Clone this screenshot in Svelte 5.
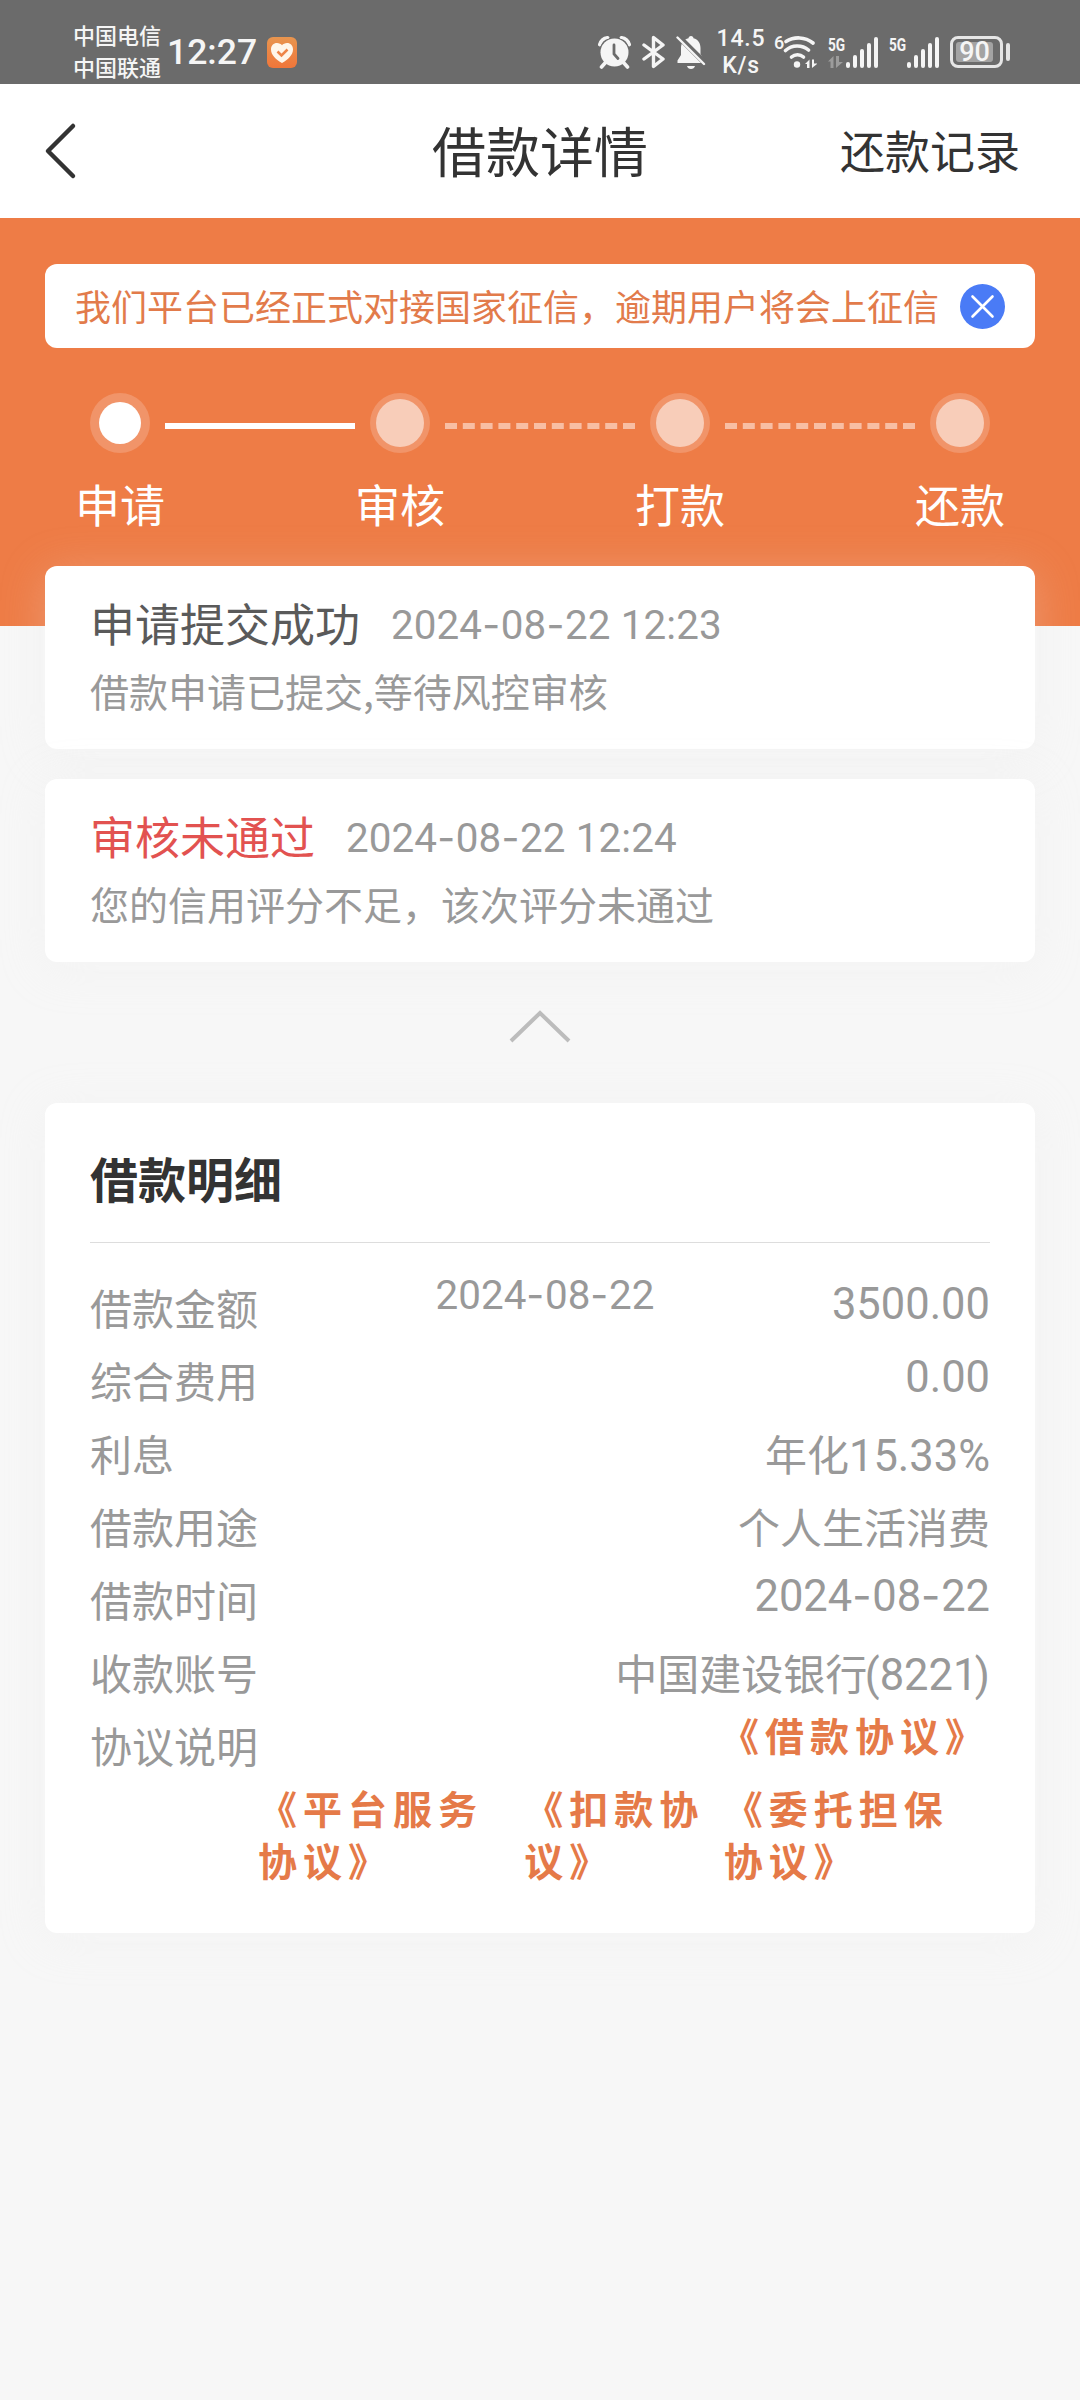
<script lang="ts">
  let noticeOpen = true;

  const steps = [
    { label: '申请', active: true },
    { label: '审核', active: false },
    { label: '打款', active: false },
    { label: '还款', active: false },
  ];

  const records = [
    { title: '申请提交成功', time: '2024-08-22 12:23', desc: '借款申请已提交,等待风控审核', failed: false },
    { title: '审核未通过', time: '2024-08-22 12:24', desc: '您的信用评分不足，该次评分未通过', failed: true },
  ];

  const details = [
    { label: '借款金额', note: '2024-08-22', value: '3500.00' },
    { label: '综合费用', value: '0.00' },
    { label: '利息', value: '年化15.33%' },
    { label: '借款用途', value: '个人生活消费' },
    { label: '借款时间', value: '2024-08-22' },
    { label: '收款账号', value: '中国建设银行(8221)' },
  ];

  const agreements = ['《平台服务协议》', '《扣款协议》', '《委托担保协议》'];
  const bars = [6, 13, 19, 25, 31];

  // latin runs and hyphens use a different face than the Chinese text
  function runs(text: string) {
    return text.match(/-|[()]|[\x20-\x27\x2a-\x2c\x2e-\x7e]+|[^\x20-\x7e]+/g) ?? [];
  }

  function runClass(run: string) {
    if (run === '-') return 'dash';
    if (run === '(' || run === ')') return 'num paren';
    return 'num';
  }

  function isNumeric(text: string) {
    return /^[\d.\- :]+$/.test(text);
  }
</script>

{#snippet mixed(text)}
  {#each runs(text) as run}{#if run.charCodeAt(0) < 128}<span class={runClass(run)}>{run}</span>{:else}{run}{/if}{/each}
{/snippet}

{#snippet signal(dim)}
  <div class="signal">
    <div class="net">
      <span>5G</span>
      {#if dim}
        <svg width="15" height="12" viewBox="0 0 15 12" fill="#9c9c9c">
          <path d="M0 5.500 5.500 0v12H2.500V5.500zM8 0h3v6h4l-7 6z" />
        </svg>
      {/if}
    </div>
    <div class="bars">
      {#each bars as h}
        <i style="height: {h}px"></i>
      {/each}
    </div>
  </div>
{/snippet}

<div class="page">
  <div class="status-bar">
    <div class="carriers">
      <span>中国电信</span>
      <span>中国联通</span>
    </div>
    <span class="clock">12:27</span>
    <svg class="app-badge" width="30" height="31" viewBox="0 0 30 31">
      <defs>
        <linearGradient id="badge" x1="0" y1="0" x2="0" y2="1">
          <stop offset="0" stop-color="#e8954f" />
          <stop offset="1" stop-color="#f0763a" />
        </linearGradient>
      </defs>
      <rect width="30" height="31" rx="6" fill="url(#badge)" />
      <path d="M15 26C9 22.500 4 18 4 12.500C4 8.500 6.500 6 10 6C12 6 14 7 15 8.200C16 7 18 6 20 6C23.500 6 26 8.500 26 12.500C26 18 21 22.500 15 26Z" fill="#fff6ea" />
      <path d="M10.500 14.500l4 4 6-6" fill="none" stroke="#ee8548" stroke-width="2.500" />
    </svg>

    <div class="status-icons">
      <svg width="33" height="33" viewBox="0 0 33 33">
        <path d="M2 9C3 5 6 2.500 10 2M31 9C30 5 27 2.500 23 2" fill="none" stroke="#f5f5f5" stroke-width="3.200" stroke-linecap="round" />
        <circle cx="16.500" cy="16.500" r="15.500" fill="#6b6b6b" />
        <path d="M1.500 8.500C2.500 5 5.500 2 9.500 1.500M31.500 8.500C30.500 5 27.500 2 23.500 1.500" fill="none" stroke="#f5f5f5" stroke-width="3" stroke-linecap="round" />
        <path d="M7.500 26.500l-4 4.500M25.500 26.500l4 4.500" stroke="#f5f5f5" stroke-width="3.600" stroke-linecap="round" />
        <circle cx="16.500" cy="16.500" r="14" fill="#f5f5f5" />
        <path d="M16 9v9l4 4.500" fill="none" stroke="#6b6b6b" stroke-width="2.800" stroke-linecap="round" />
      </svg>
      <svg width="23" height="34" viewBox="0 0 23 34" fill="none" stroke="#f5f5f5" stroke-width="3.400" stroke-linejoin="round" stroke-linecap="round">
        <path d="M2 10l19 14-9.500 7.500v-29L21 10 2 24" />
      </svg>
      <svg width="30" height="34" viewBox="0 0 30 34">
        <path d="M15 1c1.500 0 2.500 1 2.500 2.300C22 4.500 24.500 8 24.500 13v6L28 25v3H1.500v-2.500L5 20v-7C5 8 8 4.500 12.500 3.300 12.500 2 13.500 1 15 1zM11 31h8c-.5 1.800-2 3-4 3s-3.500-1.200-4-3z" fill="#f5f5f5" />
        <path d="M0 -1L32 31" stroke="#6b6b6b" stroke-width="5.500" />
        <path d="M1.500 2.500L28 29" stroke="#f5f5f5" stroke-width="2.400" stroke-linecap="round" />
      </svg>
      <div class="speed">
        <span>14.5</span>
        <span>K/s</span>
      </div>
      <div class="wifi">
        <span>6</span>
        <svg width="34" height="33" viewBox="0 0 34 33" fill="none" stroke="#f5f5f5" stroke-width="3.600" stroke-linecap="round">
          <path d="M3 5.500C11 .5 22 .5 30 7" />
          <path d="M2.500 14.500C9 8.500 19 8.500 25.500 14" />
          <path d="M8.500 21C12 18 17 18 20.500 21" />
          <circle cx="14" cy="28.500" r="3.200" fill="#f5f5f5" stroke="none" />
          <path d="M22 28l4.500-4.500V32H24v-4zM29 23.500h2v4h3.500L29 32z" fill="#f5f5f5" stroke="none" />
        </svg>
      </div>
      {@render signal(true)}
      {@render signal(false)}
      <div class="battery">
        <div class="cell"><span>90</span></div>
        <i></i>
      </div>
    </div>
  </div>

  <header>
    <svg class="back" width="34" height="60" viewBox="0 0 34 60">
      <path d="M29 6L4 31l25 25" fill="none" stroke="#333" stroke-width="4.500" stroke-linecap="round" stroke-linejoin="round" />
    </svg>
    <h1>借款详情</h1>
    <a href="#records">还款记录</a>
  </header>

  <section class="hero">
    {#if noticeOpen}
      <div class="notice">
        <p>我们平台已经正式对接国家征信，逾期用户将会上征信</p>
        <button aria-label="关闭" on:click={() => (noticeOpen = false)}>
          <svg width="45" height="45" viewBox="0 0 45 45">
            <circle cx="22.500" cy="22.500" r="22.500" fill="#4a7bf6" />
            <path d="M12.500 12.500l20 20M32.500 12.500l-20 20" stroke="#fff" stroke-width="2.600" stroke-linecap="round" />
          </svg>
        </button>
      </div>
    {/if}

    <div class="steps">
      {#each steps as step, i}
        {#if i > 0}
          <div class="line" class:done={i === 1}></div>
        {/if}
        <div class="step" class:active={step.active}>
          <div class="dot"><i></i></div>
          <span>{step.label}</span>
        </div>
      {/each}
    </div>
  </section>

  <main>
    {#each records as record}
      <div class="card record">
        <div class="record-head">
          <strong class:failed={record.failed}>{record.title}</strong>
          <span class="time">{@render mixed(record.time)}</span>
        </div>
        <p>{record.desc}</p>
      </div>
    {/each}

    <svg class="collapse" width="64" height="40" viewBox="0 0 64 40">
      <path d="M3 35L32 7l29 28" fill="none" stroke="#bcbcbc" stroke-width="4" />
    </svg>

    <div class="card detail">
      <h2>借款明细</h2>
      <div class="rows">
        {#each details as item}
          <div class="row">
            <span class="label">{item.label}</span>
            {#if item.note}
              <span class="note">{@render mixed(item.note)}</span>
            {/if}
            <span class="value" class:numeric={isNumeric(item.value)}>{@render mixed(item.value)}</span>
          </div>
        {/each}
        <div class="row">
          <span class="label">协议说明</span>
          <a class="agreement" href="#loan">《借款协议》</a>
        </div>
        <div class="agreements">
          {#each agreements as name}
            <a class="agreement" href="#agreement">{name}</a>
          {/each}
        </div>
      </div>
    </div>
  </main>
</div>

<style>
  :global(body) {
    background: #f7f7f7;
  }

  .page {
    width: 1080px;
    min-height: 2400px;
    background: #f7f7f7;
    font-family: "Noto Sans CJK SC", sans-serif;
    color: #333;
  }

  .page * {
    box-sizing: border-box;
  }

  h1, h2, p {
    margin: 0;
  }

  a {
    color: inherit;
    text-decoration: none;
  }

  svg {
    display: block;
    flex: none;
  }

  .status-bar {
    display: flex;
    align-items: center;
    height: 84px;
    padding: 20px 70px 0 73px;
    background: #6b6b6b;
    color: #f5f5f5;
  }

  .carriers {
    display: flex;
    flex-direction: column;
    padding-bottom: 3px;
    font-size: 22px;
    font-weight: 500;
    line-height: 31.500px;
  }

  .clock {
    margin-left: 6px;
    font-family: Roboto, sans-serif;
    font-size: 35.500px;
    font-weight: 500;
    line-height: 64px;
  }

  .app-badge {
    margin-left: 10px;
  }

  .status-icons {
    display: flex;
    align-items: center;
    gap: 11px;
    margin-left: auto;
    font-family: Roboto, sans-serif;
  }

  .speed {
    display: flex;
    flex-direction: column;
    align-items: center;
    width: 46px;
    padding-left: 2px;
    font-size: 23px;
    font-weight: 500;
    line-height: 27px;
    letter-spacing: 0.8px;
  }

  .wifi {
    display: flex;
    width: 43px;
  }

  .wifi span {
    width: 9px;
    font-size: 18px;
    font-weight: 500;
    line-height: 14px;
  }

  .signal {
    display: flex;
    justify-content: space-between;
    width: 50px;
    height: 31px;
  }

  .net {
    display: flex;
    flex-direction: column;
    justify-content: space-between;
    width: 0;
    font-size: 19px;
    font-weight: 700;
    line-height: 15px;
  }

  .net span {
    transform: scaleX(0.72);
    transform-origin: left;
  }

  .bars {
    display: flex;
    align-items: flex-end;
    gap: 3px;
  }

  .bars i {
    width: 4px;
    border-radius: 2px;
    background: #f5f5f5;
  }

  .battery {
    display: flex;
    align-items: center;
    gap: 3px;
    width: 60px;
  }

  .cell {
    display: flex;
    width: 53px;
    height: 32px;
    padding: 3px;
    border: 3px solid #e6e6e6;
    border-radius: 8px;
  }

  .cell span {
    width: 37px;
    border-radius: 3px;
    background: #a3a3a3;
    font-size: 27px;
    font-weight: 500;
    line-height: 20px;
    text-align: center;
  }

  .battery i {
    width: 4px;
    height: 18px;
    border-radius: 2px;
    background: #e6e6e6;
  }

  header {
    display: grid;
    grid-template-columns: 1fr auto 1fr;
    align-items: center;
    height: 134px;
    padding: 0 60px 2px 44px;
    background: #fff;
  }

  header h1 {
    padding-left: 16px;
    font-size: 54px;
    font-weight: 400;
    line-height: 70px;
  }

  header a {
    justify-self: end;
    font-size: 45px;
    line-height: 60px;
  }

  .hero {
    height: 408px;
    padding: 46px 45px 0;
    background: #ee7c46;
  }

  .notice {
    display: flex;
    align-items: center;
    justify-content: space-between;
    height: 84px;
    padding: 0 30px;
    border-radius: 12px;
    background: #fff;
  }

  .notice p {
    padding-bottom: 3px;
    color: #e27b4b;
    font-size: 36px;
    line-height: 50px;
    white-space: nowrap;
  }

  .notice button {
    padding: 0;
    border: none;
    background: none;
    cursor: pointer;
  }

  .steps {
    display: flex;
    justify-content: space-between;
    padding: 45px 30px 0;
  }

  .step {
    display: flex;
    flex-direction: column;
    align-items: center;
    width: 90px;
    color: #fff;
    font-size: 45px;
    line-height: 60px;
  }

  .step span {
    margin-top: 21px;
  }

  .dot {
    display: flex;
    align-items: center;
    justify-content: center;
    width: 60px;
    height: 60px;
    border-radius: 50%;
    background: #f19469;
  }

  .dot i {
    width: 48px;
    height: 48px;
    border-radius: 50%;
    background: #f8cdb9;
  }

  .active .dot i {
    width: 42px;
    height: 42px;
    background: #fff;
  }

  .line {
    width: 190px;
    height: 0;
    margin-top: 30px;
    border-top: 6px dashed #f8bea3;
  }

  .line.done {
    border-top: 6px solid #fff;
  }

  main {
    display: flex;
    flex-direction: column;
    gap: 30px;
    margin-top: -60px;
    padding: 0 45px;
  }

  .card {
    position: relative;
    border-radius: 12px;
    background: #fff;
    box-shadow: 0 6px 45px rgba(236, 236, 236, 0.25);
  }

  .record {
    height: 183px;
    padding: 27px 45px;
  }

  .record-head {
    display: flex;
    align-items: center;
    gap: 31px;
    height: 60px;
    line-height: 60px;
  }

  .record strong {
    color: #5a5a5a;
    font-size: 45px;
    font-weight: 400;
  }

  .record .failed {
    color: #e25250;
  }

  .time,
  .record p {
    color: #999;
    font-size: 39px;
  }

  .time {
    padding-bottom: 2px;
  }

  .record p {
    margin-top: 7px;
    line-height: 60px;
  }

  .num {
    font-family: Roboto, sans-serif;
    font-size: 1.035em;
    line-height: 1;
  }

  .time .num {
    letter-spacing: 0.1px;
  }

  .num.paren {
    margin-left: -2.500px;
  }

  .dash {
    font-family: Inter, sans-serif;
    line-height: 1;
    letter-spacing: 0.7px;
  }

  .collapse {
    align-self: center;
    margin: 14px 0 27px;
  }

  .detail {
    height: 830px;
    padding: 0 45px;
  }

  .detail h2 {
    height: 140px;
    padding-top: 12px;
    border-bottom: 1px solid #ddd;
    font-size: 48px;
    font-weight: 700;
    line-height: 125px;
  }

  .rows {
    padding-top: 27px;
    color: #999;
    font-size: 42px;
  }

  .row {
    display: flex;
    justify-content: space-between;
    height: 73px;
    line-height: 73px;
  }

  .note {
    font-family: Roboto, sans-serif;
    font-size: 39px;
    line-height: 52px;
  }

  .value.numeric {
    font-family: Roboto, sans-serif;
    line-height: 70px;
  }

  .agreement {
    padding-top: 1px;
    color: #e57a48;
    font-size: 39px;
    font-weight: 700;
    line-height: 51.500px;
    letter-spacing: 6px;
  }

  .agreements {
    display: flex;
    margin-left: 168px;
  }
</style>
